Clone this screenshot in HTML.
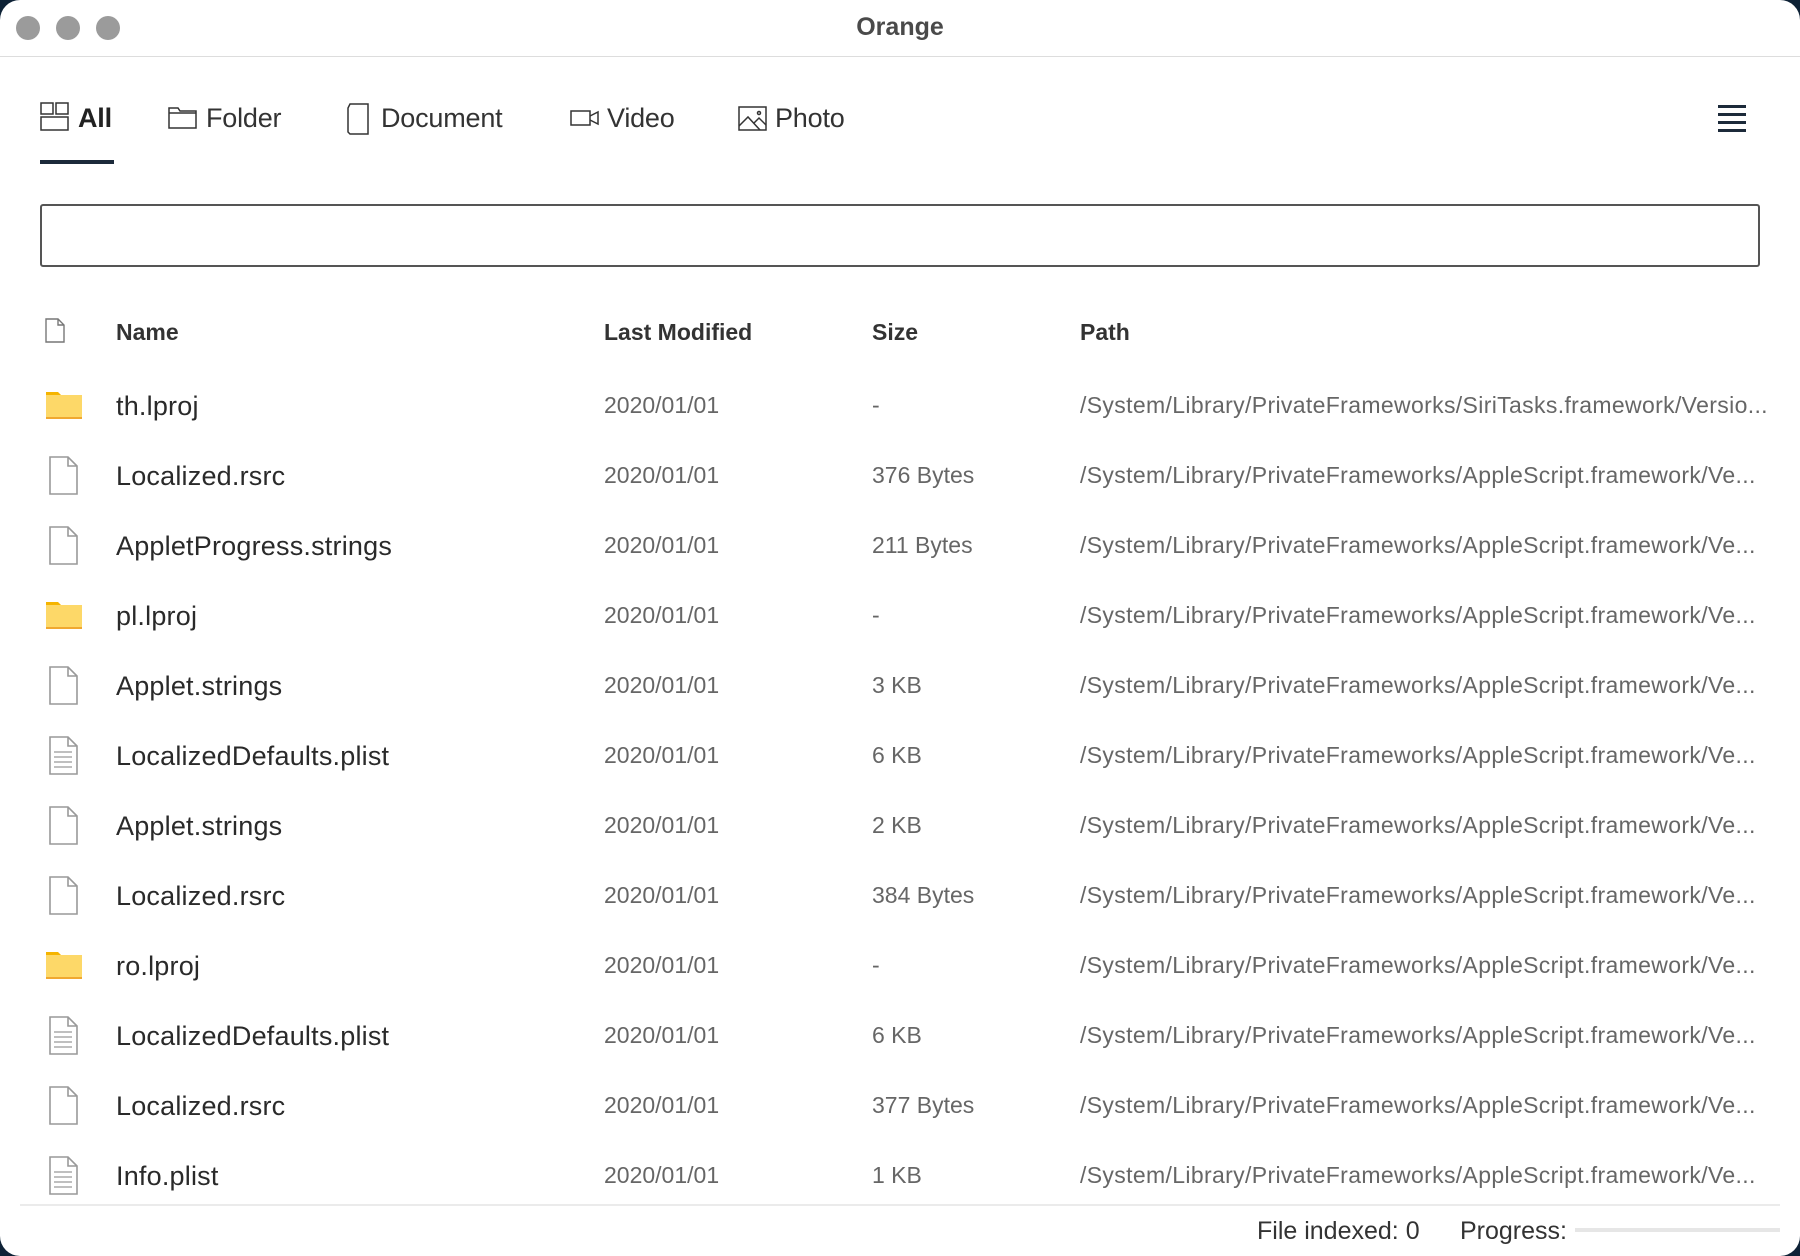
<!DOCTYPE html>
<html><head><meta charset="utf-8"><style>
*{margin:0;padding:0;box-sizing:border-box}
html,body{width:1800px;height:1256px;overflow:hidden;background:#0e2236}
body{font-family:"Liberation Sans",sans-serif;color:#222}
.win{position:absolute;left:0;top:0;width:1800px;height:1256px;background:#fff;border-radius:20px;overflow:hidden}
.abs{position:absolute}
.dot{position:absolute;top:16px;width:24px;height:24px;border-radius:50%;background:#9b9b9b}
.title{position:absolute;left:0;width:1800px;top:13px;text-align:center;font-weight:bold;font-size:25px;color:#4a4a4a}
.tab{position:absolute;top:103px;font-size:27px;color:#333;letter-spacing:-0.2px}
.hd{position:absolute;top:319px;font-size:23px;font-weight:bold;color:#333}
.row{position:absolute;left:0;width:1800px;height:70px}
.nm{position:absolute;left:116px;top:21px;font-size:27px;color:#2a2a2a;letter-spacing:0.2px}
.dt{position:absolute;left:604px;top:22px;font-size:23px;color:#666}
.sz{position:absolute;left:872px;top:22px;font-size:23px;color:#666}
.pt{position:absolute;left:1080px;top:22px;font-size:23px;color:#666;white-space:nowrap;letter-spacing:0.35px}
.ic{position:absolute;left:46px;top:16px}
</style></head><body>
<div class="win">
<div class="dot" style="left:16px"></div><div class="dot" style="left:56px"></div><div class="dot" style="left:96px"></div>
<div class="title">Orange</div>
<div class="abs" style="left:0;top:56px;width:1800px;height:1px;background:#ddd"></div>

<svg class="abs" style="left:40px;top:102px" width="30" height="30" viewBox="0 0 30 30" fill="none" stroke="#333" stroke-width="1.5"><rect x="1" y="1" width="12" height="11"/><rect x="16" y="1" width="12" height="11"/><rect x="1" y="15" width="27" height="13"/></svg>
<div class="tab" style="left:78px;font-weight:bold;color:#222">All</div>
<div class="abs" style="left:40px;top:160px;width:74px;height:4px;background:#1c2a3a"></div>

<svg class="abs" style="left:168px;top:106px" width="30" height="24" viewBox="0 0 30 24" fill="none" stroke="#333" stroke-width="1.5"><path d="M1 2h9l2 3h16v17H1z M1 7h27"/></svg>
<div class="tab" style="left:206px">Folder</div>

<svg class="abs" style="left:346px;top:103px" width="24" height="32" viewBox="0 0 24 32" fill="none" stroke="#333" stroke-width="1.5"><path d="M4 1h18v30H4l-2-2V5z"/></svg>
<div class="tab" style="left:381px">Document</div>

<svg class="abs" style="left:570px;top:108px" width="30" height="20" viewBox="0 0 30 20" fill="none" stroke="#333" stroke-width="1.5"><rect x="1" y="3" width="19" height="14"/><path d="M20 8l8-4v12l-8-4"/></svg>
<div class="tab" style="left:607px">Video</div>

<svg class="abs" style="left:738px;top:106px" width="30" height="26" viewBox="0 0 30 26" fill="none" stroke="#333" stroke-width="1.5"><rect x="1" y="1" width="27" height="23"/><path d="M1 20l9-9 12 13 M16 17l5-5 7 7"/><circle cx="21" cy="7" r="1.5"/></svg>
<div class="tab" style="left:775px">Photo</div>

<div class="abs" style="left:1718px;top:105px;width:28px;height:2.5px;background:#1c2a3a"></div>
<div class="abs" style="left:1718px;top:113px;width:28px;height:2.5px;background:#1c2a3a"></div>
<div class="abs" style="left:1718px;top:121px;width:28px;height:2.5px;background:#1c2a3a"></div>
<div class="abs" style="left:1718px;top:129px;width:28px;height:2.5px;background:#1c2a3a"></div>

<div class="abs" style="left:40px;top:204px;width:1720px;height:63px;border:2px solid #555;border-radius:3px"></div>

<svg class="abs" style="left:44px;top:318px" width="22" height="26" viewBox="0 0 22 26" fill="none" stroke="#777" stroke-width="1.4"><path d="M2 1h12l6 6v17H2z M14 1v6h6"/></svg>
<div class="hd" style="left:116px">Name</div>
<div class="hd" style="left:604px">Last Modified</div>
<div class="hd" style="left:872px">Size</div>
<div class="hd" style="left:1080px">Path</div>

<div id="rows"></div>
<div class="abs" style="left:20px;top:1204px;width:1760px;height:2px;background:#ebebeb"></div>
<div class="abs" style="left:1257px;top:1217px;font-size:25px;color:#333">File indexed: 0</div>
<div class="abs" style="left:1460px;top:1217px;font-size:25px;color:#333">Progress:</div>
<div class="abs" style="left:1575px;top:1228px;width:205px;height:4px;background:#e6e6e6"></div>
</div>
<script>
var F='<svg class="ic" style="left:46px;top:20px" width="38" height="30" viewBox="0 0 38 30"><path d="M0 2h12l3 3H0z" fill="#f5b400"/><rect x="0" y="5" width="36" height="23" fill="#fdd868"/><rect x="0" y="27" width="36" height="2" fill="#f0a830"/></svg>';
var D='<svg class="ic" style="left:48px;top:16px" width="32" height="40" viewBox="0 0 32 40" fill="none" stroke="#999" stroke-width="1.6"><path d="M2 1h18l9 9v28H2z M20 1v9h9"/></svg>';
var P='<svg class="ic" style="left:48px;top:16px" width="32" height="40" viewBox="0 0 32 40" fill="none" stroke="#999" stroke-width="1.6"><path d="M2 1h18l9 9v28H2z M20 1v9h9"/><path d="M6 16h18M6 21h18M6 26h18M6 31h18" stroke="#aaa"/></svg>';
var A='/System/Library/PrivateFrameworks/AppleScript.framework/Ve...';
var r=[[F,'th.lproj','-','/System/Library/PrivateFrameworks/SiriTasks.framework/Versio...'],
[D,'Localized.rsrc','376 Bytes',A],[D,'AppletProgress.strings','211 Bytes',A],[F,'pl.lproj','-',A],
[D,'Applet.strings','3 KB',A],[P,'LocalizedDefaults.plist','6 KB',A],[D,'Applet.strings','2 KB',A],
[D,'Localized.rsrc','384 Bytes',A],[F,'ro.lproj','-',A],[P,'LocalizedDefaults.plist','6 KB',A],
[D,'Localized.rsrc','377 Bytes',A],[P,'Info.plist','1 KB',A]];
var h='';r.forEach(function(x,i){h+='<div class="row" style="top:'+(370+70*i)+'px">'+x[0]+'<div class="nm">'+x[1]+'</div><div class="dt">2020/01/01</div><div class="sz">'+x[2]+'</div><div class="pt">'+x[3]+'</div></div>'});
document.getElementById('rows').outerHTML=h;
</script>
</body></html>
